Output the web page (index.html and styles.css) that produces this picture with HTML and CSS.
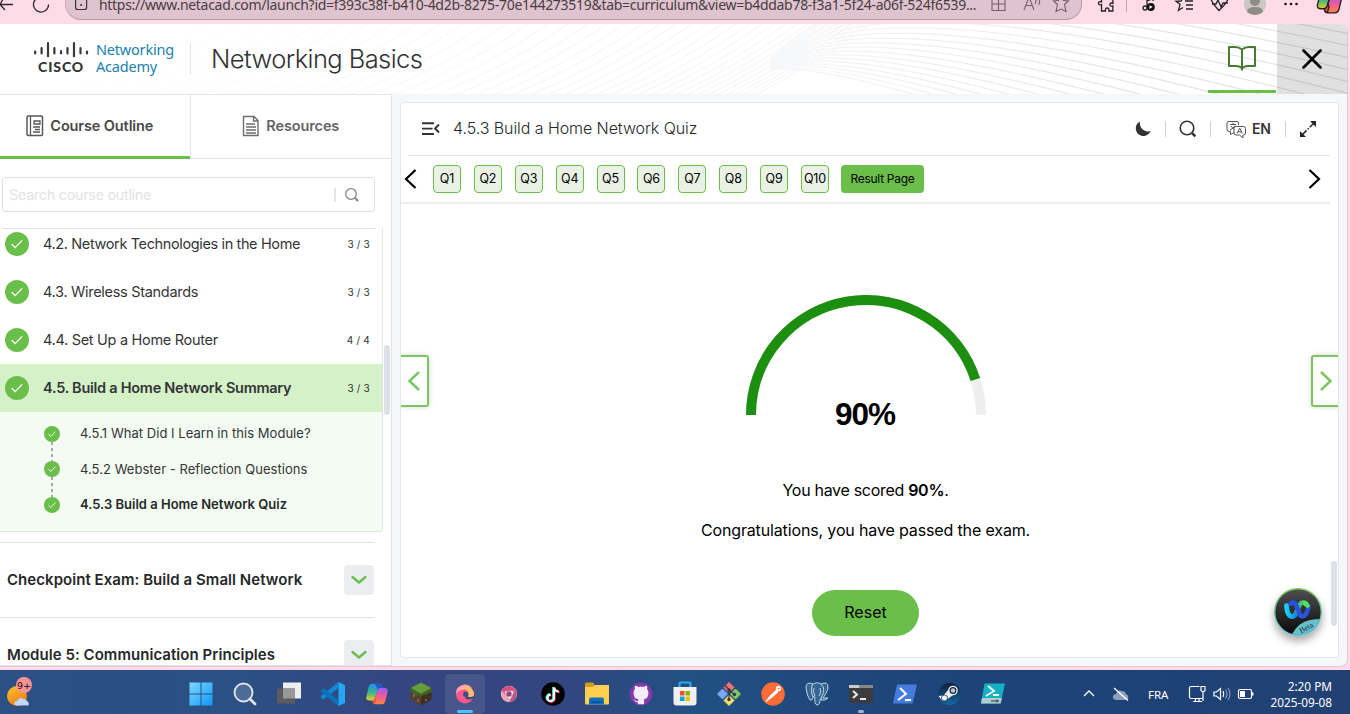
FILE: index.html
```html
<!DOCTYPE html>
<html lang="en">
<head>
<meta charset="utf-8">
<title>Networking Basics</title>
<link rel="stylesheet" href="styles.css">
</head>
<body>
<svg class="defs" width="0" height="0">
  <defs>
    <symbol id="check" viewBox="0 0 24 24"><circle cx="12" cy="12" r="12" fill="#6abf4b"/><path d="M6.700 12.200l3.500 3.400 7-7.200" fill="none" stroke="#fff" stroke-width="1.300"/></symbol>
    <symbol id="chev" viewBox="0 0 30 30"><path d="M8.500 12l6.500 5.500 6.500-5.500" fill="none" stroke="#6abf4b" stroke-width="2.400" stroke-linecap="round" stroke-linejoin="round"/></symbol>
    <linearGradient id="copA" x1="0" y1="0" x2="0" y2="1"><stop offset="0" stop-color="#1e90f0"/><stop offset=".55" stop-color="#3ab980"/><stop offset="1" stop-color="#f5c92b"/></linearGradient>
    <linearGradient id="copB" x1="0" y1="0" x2="0" y2="1"><stop offset="0" stop-color="#9b5cf5"/><stop offset=".5" stop-color="#ee5a9c"/><stop offset="1" stop-color="#fa8540"/></linearGradient>
    <symbol id="copilot" viewBox="0 0 26 26"><path d="M8 2h8q2 0 2.500 2l.7 2.500h-3q-2 0-2.700 2.500L11 17q-.7 3-3 3H5q-4.500 0-3.500-4L4 5q1-3 4-3z" fill="url(#copA)"/><path d="M18 24h-7q-2 0-2.600-2L8 20q2 0 3-3l2.500-8q.7-2.500 2.700-2.500H21q4.500 0 3.500 4L22 21q-1 3-4 3z" fill="url(#copB)"/><path d="M10 2h6q2 0 2.500 2l.7 2.500h-3q-2 0-2.700 2L12 4z" fill="#2355c9"/><path d="M8 20q2 0 3-3l.5-2 1 3-1.500 5.500q-2-.5-2.500-1.500z" fill="#f2593a"/></symbol>
  </defs>
</svg>

<div class="browser">
  <svg class="nav-icons" width="65" height="23" fill="none" stroke="#29272a" stroke-width="1.300"><path d="M0 4.500h13M0 4.500l5 5.500M0 4.500L3-1"/><path d="M48.500 4.500a7.500 7.500 0 1 1-12.800-5.300"/></svg>
  <div class="address">
    <svg width="30" height="20" fill="none" stroke="#3d3338" stroke-width="1.200"><rect x="9.600" y="-2" width="11" height="11.500" rx="2"/><circle cx="15.100" cy="5" r="1" fill="#3d3338" stroke="none"/></svg>
    <span class="url">https://www.netacad.com/launch?id=f393c38f-b410-4d2b-8275-70e144273519&amp;tab=curriculum&amp;view=b4ddab78-f3a1-5f24-a06f-524f6539...</span>
    <svg class="address-icons" width="100" height="20" fill="none" stroke="#75606a" stroke-width="1.100"><path d="M11-2v12.500h13V4H11M17.500-2v12.500M20-1h4v5"/><path d="M43 10l5-13 5 13M45 5.500h6.500M54-1q2 2 0 5M57-2q3 3 .5 7"/><path d="M76.500 4.500l-4-3.500 5-.5L80-4l2.500 4.500 5 .5-4 3.500 1.500 7-5-2.500-5 2.500z"/></svg>
  </div>
  <svg class="tool-icons" width="268" height="23" fill="none" stroke="#242225" stroke-width="1.300">
    <path d="M19.500-2v4q-3-1-3 1.300t3 1.200V11h4q-.5-3 1.700-3t1.700 3h4V6q-3 .7-3-1.500t3-1.200V-2"/><path d="M44.500 0v12" stroke="#c6a4b1" stroke-width="1"/>
    <path d="M65-3v10M71-3v4M65 1l5-2"/><circle cx="63" cy="8" r="2"/><circle cx="68.800" cy="7" r="4" fill="#111" stroke="none"/><path d="M67.500 5.200l3 1.800-3 1.900z" fill="#fff" stroke="none"/>
    <path d="M101-2l-2 3-5 .3 4 3-1.500 6L101 7.500M103 1h8M104 5h7M104 9h7"/>
    <path d="M129-1q1 4 8 11.500Q144 4 146-1M130 4h4l2-4 3 7 2-4h5"/>
    <circle cx="173" cy="4" r="11" fill="#cbc7c2" stroke="none"/><circle cx="173" cy="1" r="5" fill="#8f8a84" stroke="none"/><path d="M165 12q0-5 8-5t8 5q-8 6-16 0z" fill="#8f8a84" stroke="none"/>
    <g fill="#111" stroke="none"><circle cx="203.500" cy="4" r="1.300"/><circle cx="209" cy="4" r="1.300"/><circle cx="214.500" cy="4" r="1.300"/></g>
    <use href="#copilot" x="234" y="-12" width="27" height="27"/>
  </svg>
</div>

<div class="viewport">
  <header class="top">
    <svg class="waves" id="waves" width="1347" height="70"><defs><linearGradient id="wg" gradientUnits="userSpaceOnUse" x1="760" x2="1150" y1="0" y2="0"><stop offset="0" stop-color="#f7f8fa"/><stop offset="1" stop-color="#e0e5ea"/></linearGradient><linearGradient id="wl" gradientUnits="userSpaceOnUse" x1="100" x2="560" y1="0" y2="0"><stop offset="0" stop-color="#fdfdfe"/><stop offset="1" stop-color="#f2f4f6"/></linearGradient></defs></svg>
    <div class="brand">
      <div class="mark">
        <svg width="58" height="17" viewBox="0 0 58 17"><path d="M2.200 10.500v2M8.600 7v5.500M15 2.200v13M21.400 7v5.500M28 10v2.500M34.500 7v5.500M41 2.200v13M47.500 7v5.500M54 10.500v2" stroke="#3a3a3a" stroke-width="2.200" stroke-linecap="round"/></svg>
        <b class="cisco">CISCO</b>
      </div>
      <div class="academy"><span>Networking</span><span>Academy</span></div>
    </div>
    <h1>Networking Basics</h1>
    <div class="top-book"><svg width="30" height="28" fill="none" stroke="#457c31" stroke-width="2" stroke-linejoin="round"><path d="M15 5.500Q12 3 8 3H2v19h7q4 0 6 2.500 2-2.500 6-2.500h7V3h-6q-4 0-7 2.500zM15 5.500v21"/></svg></div>
    <div class="top-close"><svg width="20" height="20" stroke="#000" stroke-width="2.700" stroke-linecap="round"><path d="M1.500 1.500l17 17M18.500 1.500l-17 17"/></svg></div>
  </header>

  <div class="body">
    <aside class="side">
      <div class="tabs">
        <div class="tab on"><svg width="18" height="22" fill="none" stroke="#58585b" stroke-width="1.500"><rect x="1" y="1" width="15.500" height="19.500" rx="1"/><path d="M4.500 1v19.500M8 6h6v3H8zM7 12h7M9 14.500h5M7 17h7" stroke-width="1.300"/></svg>Course Outline</div>
        <div class="tab"><svg width="18" height="22" fill="none" stroke="#6e6e70" stroke-width="1.400"><path d="M1.500 1.500h10.500l4 4v15h-14.500zM11.500 1.500v4.500H16M4 9h9M4 12h10M4 15h10M4 18h10"/></svg>Resources</div>
      </div>
      <div class="search"><span>Search course outline</span><i></i><svg width="16" height="16" fill="none" stroke="#858588" stroke-width="1.300"><circle cx="7" cy="7" r="5.300"/><path d="M11 11l3 3" stroke-width="1.900"/></svg></div>
      <div class="outline">
        <div class="lessons">
          <div class="row"><svg class="ck"><use href="#check"/></svg><span class="t1">4.2. Network Technologies in the Home</span><em>3 / 3</em></div>
          <div class="row"><svg class="ck"><use href="#check"/></svg><span class="t2">4.3. Wireless Standards</span><em>3 / 3</em></div>
          <div class="row"><svg class="ck"><use href="#check"/></svg><span class="t3">4.4. Set Up a Home Router</span><em>4 / 4</em></div>
          <div class="row cur"><svg class="ck"><use href="#check"/></svg><span class="t4">4.5. Build a Home Network Summary</span><em>3 / 3</em></div>
          <div class="subs">
            <div class="sub"><svg class="ck"><use href="#check"/></svg><span>4.5.1 What Did I Learn in this Module?</span></div>
            <div class="sub"><svg class="ck"><use href="#check"/></svg><span>4.5.2 Webster - Reflection Questions</span></div>
            <div class="sub now"><svg class="ck"><use href="#check"/></svg><span>4.5.3 Build a Home Network Quiz</span></div>
          </div>
        </div>
        <div class="module"><span>Checkpoint Exam: Build a Small Network</span><svg class="drop"><use href="#chev"/></svg></div>
        <div class="module"><span>Module 5: Communication Principles</span><svg class="drop"><use href="#chev"/></svg></div>
        <div class="scroll side-scroll"></div>
      </div>
    </aside>

    <main class="panel">
      <div class="title-row">
        <svg width="20" height="16" stroke="#333" stroke-width="1.900" fill="none"><path d="M1 2.300h12M1 7.600h10.500M1 13h12M18 3.500l-4 4 4 4"/></svg>
        <h2>4.5.3 Build a Home Network Quiz</h2>
        <div class="tools">
          <svg class="moon" width="18" height="18"><path d="M6 1.500A7.600 7.600 0 1 0 16.500 11 8.200 8.200 0 0 1 6 1.500z" fill="#333"/></svg><i></i>
          <svg class="mag" width="20" height="20" fill="none" stroke="#333" stroke-width="1.600"><circle cx="9" cy="9" r="6.800"/><path d="M13.800 13.800l3.500 3.500" stroke-width="2.500"/></svg><i></i>
          <svg class="lang" width="20" height="19" fill="none" stroke="#555" stroke-width="1"><path d="M8 12.500l-3.500 2v-3H3q-2 0-2-2V3q0-1.500 2-1.500h8q1.500 0 1.500 1.500v2M4 4.500h6M7 3v1.500M9 5.500q-1.500 3-5 4.500M5 6l3 3.500M11 6.500h6.500q2 0 2 2V13q0 2-2 2H17v3l-3.500-3H10q-2 0-2-2V8.500q0-2 2-2zM11 13.500L13.700 8l2.600 5.500M12 11.800h3.500"/></svg>
          <b>EN</b><i></i>
          <svg class="expand" width="18" height="18"><path d="M3 15l12-12" stroke="#222" stroke-width="1.500" stroke-dasharray="6.500 1.500 1.500 1.500"/><path d="M11 1H17v6zM1 11V17h6z" fill="#1f2430"/></svg>
        </div>
      </div>
      <div class="quiz-nav">
        <svg class="prev" width="13" height="20" fill="none" stroke="#000" stroke-width="2.200"><path d="M11.500 1L2 10l9.500 9"/></svg>
        <div class="qs"><span>Q1</span><span>Q2</span><span>Q3</span><span>Q4</span><span>Q5</span><span>Q6</span><span>Q7</span><span>Q8</span><span>Q9</span><span>Q10</span></div>
        <div class="result">Result Page</div>
        <svg class="next" width="13" height="20" fill="none" stroke="#000" stroke-width="2.200"><path d="M1.500 1L11 10l-9.500 9"/></svg>
      </div>
      <div class="score">
        <div class="gauge">
          <svg width="240" height="120" fill="none" stroke-width="10"><path d="M5 120A115 115 0 0 1 235 120" stroke="#eee"/><path d="M5 120A115 115 0 0 1 229.370 84.460" stroke="#1c8f10"/></svg>
          <strong>90%</strong>
        </div>
        <p class="p1">You have scored <b>90%</b>.</p>
        <p class="p2">Congratulations, you have passed the exam.</p>
        <div class="reset">Reset</div>
      </div>
      <div class="side-btn left"><svg width="14" height="20"><path d="M12 1L2.500 10l9.500 9" fill="none" stroke="#7cc660" stroke-width="2.500"/></svg></div>
      <div class="side-btn right"><svg width="14" height="20"><path d="M2 1l9.500 9L2 19" fill="none" stroke="#7cc660" stroke-width="2.500"/></svg></div>
      <div class="scroll main-scroll"></div>
      <div class="webex">
        <svg width="48" height="48"><defs><linearGradient id="dark" x1="0" y1="0" x2="0" y2="1"><stop offset="0" stop-color="#505050"/><stop offset="1" stop-color="#080808"/></linearGradient><linearGradient id="ring" x1="0" y1="0" x2="0" y2="1"><stop offset="0" stop-color="#7cc65a"/><stop offset="1" stop-color="#5bbfdc"/></linearGradient><linearGradient id="w1" x1="0" y1="0" x2="1" y2="0"><stop offset="0" stop-color="#1ad0f5"/><stop offset="1" stop-color="#1685e0"/></linearGradient><linearGradient id="w2" x1="0" y1="0" x2="1" y2="0"><stop offset="0" stop-color="#1b78d8"/><stop offset="1" stop-color="#53e05a"/></linearGradient><clipPath id="round"><circle cx="24" cy="24" r="23"/></clipPath></defs>
        <circle cx="24" cy="24" r="23.300" fill="url(#dark)" stroke="url(#ring)" stroke-width="1.400"/><path d="M17 48q7-14 19-16 6-1 12-1v17z" fill="#66bfcb" clip-path="url(#round)"/>
        <g fill="none" stroke-width="4.600" stroke-linecap="round"><path d="M12.500 17.500C13 25 15.500 28.500 18.500 28.500 23.500 28.500 23.500 14.500 29 14.500q3 0 4 2.500" stroke="url(#w2)"/><path d="M12.500 17.500C13 25 15.500 28.500 18.500 28.500q2 0 3.300-3" stroke="url(#w1)"/><path d="M16.500 15.500Q20 12.500 22.500 18t3.500 9q3 3 6-1 2-3 2.500-8" stroke="#2853dc"/><path d="M31 15.500l2.500 2" stroke="#53e05a"/></g>
        <text x="27" y="45.500" transform="rotate(-28 27 45.500)" class="beta">Beta</text></svg>
      </div>
    </main>
  </div>
</div>

<footer class="taskbar">
  <div class="weather"><svg width="32" height="34"><defs><linearGradient id="sun" x1="0" y1="0" x2=".5" y2="1"><stop offset="0" stop-color="#f9c531"/><stop offset="1" stop-color="#ed7d15"/></linearGradient></defs><circle cx="11" cy="20" r="10" fill="url(#sun)"/><path d="M11 29.500q-3 0-2.500-3 .5-1.500 3-2 2-4 6-1.500 3 0 3.500 2 2.500 1 1.500 4.500z" fill="#c0d7f7"/><circle cx="18" cy="9" r="8" fill="#fb9294"/><text x="18" y="12.800" text-anchor="middle" class="badge">9+</text></svg></div>
  <div class="apps">
    <svg viewBox="0 0 26 26"><defs><linearGradient id="win" gradientUnits="userSpaceOnUse" x1="1" y1="1" x2="25" y2="25"><stop offset="0" stop-color="#80dcff"/><stop offset="1" stop-color="#0a94f7"/></linearGradient></defs><path d="M1.500 1.500h11v11h-11zM13.500 1.500h11v11h-11zM1.500 13.500h11v11h-11zM13.500 13.500h11v11h-11z" fill="url(#win)"/></svg>
    <svg viewBox="0 0 26 26" fill="none" stroke="#dfe2e7"><circle cx="11.500" cy="11.500" r="9" fill="#4c6b98" stroke-width="1.900"/><path d="M18 18l5 5" stroke-width="2.800" stroke-linecap="round"/></svg>
    <svg viewBox="0 0 26 26"><path d="M7 1.500h18v16H7z" fill="#eee"/><path d="M1 7.500h18v15H1z" fill="#5c5c5e"/><path d="M7 7.500h12v10H7z" fill="#999"/></svg>
    <svg viewBox="0 0 26 26"><path d="M18.500 1v6L3.500 18.500 1 17q-1-1 0-2z" fill="#1287d6"/><path d="M18.500 25v-6L3.500 7.500 1 9q-1 1 0 2z" fill="#0d70b8"/><path d="M18.500 1L25 4v18l-6.500 3z" fill="#27a6f3"/></svg>
    <svg viewBox="0 0 26 26"><use href="#copilot" x="1" y="1" width="24" height="24"/></svg>
    <svg viewBox="0 0 26 26"><path d="M13 1.500l10.500 5.500v11.500L13 24.500l-10.500-6V7z" fill="#5a3f2e"/><path d="M13 1.500l10.500 5.500-10.500 6L2.500 7z" fill="#659b3a"/><path d="M13 13l10.500-6v4l-2.500 1-2 3-2-1-4 3-3-3-3 1-2-3-2.500-1V7z" fill="#3c6424"/><path d="M13 15v9.500l10.500-6V11z" fill="#2b211c" opacity=".55"/><path d="M5 13h2v3H5zM9 18h2v3H9zM17 18h2v2h-2z" fill="#80604b"/></svg>
    <span class="active"><svg viewBox="0 0 26 26"><circle cx="13" cy="13.500" r="9" fill="#f9578d"/><path d="M4 13.500A9 9 0 0 1 20 7q-6-2-9 2-5 0-7 4.500z" fill="#ff9eb5"/><path d="M17 5.500q5 3 5 8-1 4.500-5.500 4-4.500 0-3.500-4 4-1 2-4-3-2-7-.5 4-5 9-3.500z" fill="#ffbc6c"/><circle cx="13.800" cy="13.200" r="2.700" fill="#414c87"/><path d="M15 15q3 2 7 0v2q-3 2-6 1.500-3-.5-3-3z" fill="#414c87"/></svg></span>
    <svg viewBox="0 0 26 26"><circle cx="13" cy="13" r="8.200" fill="#efa4bd"/><path d="M5.500 8.500Q9 5 13 5t7.500 4.500H13L8.500 13z" fill="#d74e86"/><path d="M13 21l3.500-6q1-3-1-5.500h5q2 11-7.500 11.500z" fill="#b65c8b"/><path d="M8.500 10.500h9.500L13.500 18z" fill="#fff"/><circle cx="13" cy="13" r="2.700" fill="#934975"/></svg>
    <svg viewBox="0 0 26 26"><circle cx="13" cy="13" r="11.800" fill="#000"/><g fill="none" stroke-width="2.200"><path d="M13.200 6v10.500a3.300 3.300 0 1 1-3.300-3.300M13.200 6q1 4 5 4" stroke="#25f4ee"/><path d="M14.600 7v10.500a3.300 3.300 0 1 1-3.300-3.300M14.600 7q1 4 5 4" stroke="#fe2c55"/><path d="M14 6.500v10.500a3.300 3.300 0 1 1-3.300-3.300M14 6.500q1 4 4.700 4" stroke="#fff" stroke-width="2"/></g></svg>
    <svg viewBox="0 0 26 26"><path d="M1 3q0-1.500 1.500-1.500H9l2 3h13q1 0 1 1.500v15H1z" fill="#d79a15"/><path d="M1 6h8l2-2h14v18.500q0 1-1 1H2q-1 0-1-1z" fill="#ffcf4d"/><path d="M5 23.500v-5q0-2 2-2h11q2 0 2 2v5z" fill="#126fbd"/><path d="M7 20h11v2H7z" fill="#0a569b"/></svg>
    <svg viewBox="0 0 26 26"><circle cx="13" cy="13" r="11.300" fill="#8638ad"/><path d="M13 5.500q-1.300 0-2.500.4Q8 4.500 7 4.800q-.5 1.700 0 3Q5.500 9.500 5.500 12q0 5.500 5 6.500-.5.700-.6 1.500-2 .5-3-1-.8-1.200-2-1 1.500.7 2 2 1 1.600 3 1.300v2h6.200v-3.500q0-.8-.6-1.300 5-1 5-6.500 0-2.500-1.500-4.200.5-1.300 0-3-1-.3-3.500 1.100Q14.300 5.500 13 5.500z" fill="#f4ecf7"/></svg>
    <svg viewBox="0 0 26 26"><path d="M7.500 7V2.500q0-1 1-1h9q1 0 1 1V7" fill="none" stroke="#29a9ef" stroke-width="2.200"/><path d="M1.500 6h23v15.500q0 3-3 3h-17q-3 0-3-3z" fill="#f0f0f0"/><path d="M8 10h4.500v4.500H8z" fill="#f25022"/><path d="M13.500 10H18v4.500h-4.500z" fill="#7fba00"/><path d="M8 15.500h4.500V20H8z" fill="#00a4ef"/><path d="M13.500 15.500H18V20h-4.500z" fill="#ffb900"/></svg>
    <svg viewBox="0 0 26 26"><g stroke-linejoin="round" stroke-width="1"><path d="M13 1.500l5 5-5 5-5-5z" fill="#f07373" stroke="#f07373"/><path d="M6.500 8l5 5-5 5-5-5z" fill="#7ba7f5" stroke="#7ba7f5"/><path d="M19.500 8l5 5-5 5-5-5z" fill="#80ce61" stroke="#80ce61"/><path d="M13 14.500l5 5-5 5-5-5z" fill="#f7dc65" stroke="#f7dc65"/></g><path d="M9 4.500l4 4v10M13 9l5.500 4.500" fill="none" stroke="#343846" stroke-width="1.200"/><g fill="#343846"><circle cx="13" cy="9" r="1.700"/><circle cx="13" cy="18.500" r="1.700"/><circle cx="18.500" cy="13.500" r="1.700"/></g></svg>
    <svg viewBox="0 0 26 26"><circle cx="13" cy="13" r="11.800" fill="#ff6c37"/><path d="M6 20.500l3.500-5 7-6.500 1.500 2-7 6z" fill="#fff" stroke="#fff"/><circle cx="18.500" cy="7.500" r="2.700" fill="#fff"/><path d="M17.500 8l3-1" stroke="#ff6c37"/></svg>
    <svg viewBox="0 0 26 26"><g fill="#336791" stroke="#c3d3e2" stroke-width="1"><path d="M9 3Q2 0 2 7q1 8 4 12 2 1 3-2z"/><path d="M17 3q7-3 7 3 0 4-5 11h5q-3 3-7 2z"/><path d="M8 4q4-4 9-1 5 5 1 12l-2 4q0 5-3 5-3-1-2-8-5 0-3-12z"/><path d="M10 7q-2 3 1 8M16 7q2 4-1 8" fill="none"/></g></svg>
    <span class="running"><svg viewBox="0 0 26 26"><path d="M1 4h24v18H1z" fill="#3c3c3c"/><path d="M1 4h24v3H1z" fill="#888"/><path d="M1 4h10v3H1z" fill="#ccc"/><path d="M5 10l4 3.500L5 17M12 18h6" fill="none" stroke="#eee" stroke-width="2"/></svg></span>
    <svg viewBox="0 0 26 26"><path d="M5 3.500h20L20.500 22.500H1z" fill="#467be0"/><path d="M8 7l6 6-8 6M13 19h6" fill="none" stroke="#fff" stroke-width="2"/></svg>
    <svg viewBox="0 0 26 26"><defs><linearGradient id="steam" x1="0" y1="0" x2="0" y2="1"><stop offset="0" stop-color="#101d3a"/><stop offset="1" stop-color="#126aa5"/></linearGradient></defs><circle cx="13.500" cy="13" r="11" fill="url(#steam)"/><path d="M2.500 15l5-.5 5-6 6 4.500-7 5-5 2z" fill="#eee"/><circle cx="17" cy="9.500" r="4.800" fill="#f4f4f4"/><circle cx="17" cy="9.500" r="2.900" fill="#bdc4cc" stroke="#13233f" stroke-width="1.200"/><circle cx="8.500" cy="17" r="3" fill="#f4f4f4" stroke="#13233f" stroke-width=".7"/></svg>
    <svg viewBox="0 0 26 26"><path d="M4.500 2.500h20.500L20.500 22.500H1z" fill="#16b0c4"/><path d="M2 17h20l-1.500 5.500H1z" fill="#b0cdd2"/><path d="M8 5l6 5-8 5M13 14h6" fill="none" stroke="#fff" stroke-width="1.800"/><path d="M11 20h8M17 18.500v3" stroke="#333"/></svg>
  </div>
  <svg class="tray" width="70" height="44" fill="none" stroke="#fff" stroke-width="1.300"><path d="M6 26l5-5 5 5"/><path d="M38 30q-4-1-3-4 1-2 3-2 2-5 6-3 3 0 4 3 4 2 1 6z" fill="#8da0be" stroke="none"/><path d="M36 18l14 12.500"/></svg>
  <span class="fra">FRA</span>
  <svg class="tray2" width="70" height="44" fill="none" stroke="#fff" stroke-width="1.200"><path d="M11.500 16.500H3q-1.500 0-1.500 1.500v9q0 1.500 1.500 1.500h11.500M5 31.500h9M7.500 29v2.500M11 29v2.500M13 16.500h4v4l-1 1h-2l-1-1zM15 22v9"/><path d="M26 22h2.500l4-3.500v11l-4-3.500H26zM35 21q1.500 3 0 6"/><path d="M37.500 19.500q3 4.500 0 9M40 18q4 6 0 12" stroke="#7e95b8"/><rect x="50.500" y="19.500" width="13" height="9" rx="1.500"/><path d="M64.500 22.500v3" stroke-width="2"/><path d="M52 21h5v6h-5z" fill="#fff" stroke="none"/></svg>
  <div class="clock">2:20 PM<br>2025-09-08</div>
</footer>
<script src="waves.js"></script>
</body>
</html>
```

FILE: styles.css
```css
* { box-sizing: border-box; }
body { margin: 0; width: 1350px; height: 714px; overflow: hidden; background: #ffdbe7; font-family: Inter, "Liberation Sans", sans-serif; color: #343537; }
svg { display: block; flex: none; }
.defs { position: absolute; }
.browser { height: 24px; display: flex; background: #ffdbe7; overflow: hidden; }
.address { width: 1017px; height: 20px; display: flex; background: #dfc3ce; border: 1px solid #b89aa6; border-top: 0; border-left-color: #c9abb7; border-radius: 0 0 16px 16px; }
.address-icons { margin-left: auto; }
.url { margin-left: 3px; font: 14px/20px "Noto Sans", sans-serif; letter-spacing: -.295px; color: #493d43; white-space: nowrap; margin-top: -5px; }
.viewport { width: 1348px; height: 643px; border: 1px solid #e8c6d2; border-width: 0 1px 1px 0; border-radius: 0 8px 8px 0; background: #f5f7f9; overflow: hidden; }
.top { position: relative; height: 70px; background: #fff; display: flex; align-items: stretch; }
.waves { position: absolute; inset: 0; }
.brand { position: relative; width: 191px; display: flex; padding: 17px 0 0 33px; }
.brand::after { content: ""; position: absolute; right: 0; top: 19px; height: 32px; border-right: 1px solid #e3e3e3; }
.mark { width: 58px; }
.cisco { display: block; padding-left: 5px; font: 900 14px/17px Lato, sans-serif; letter-spacing: .9px; color: #333; }
.academy { display: flex; flex-direction: column; margin-left: 5px; font: 14.500px/17px "Noto Sans", sans-serif; letter-spacing: -.2px; color: #2180ad; }
h1 { position: relative; margin: 0 0 0 20px; font-weight: 300; font-size: 25.500px; line-height: 70px; color: #333; letter-spacing: -.58px; }
.top-book { position: relative; margin-left: auto; width: 68px; margin-right: 1px; border-bottom: 3px solid #6abf4b; padding: 20px 0 0 19px; height: 69px; }
.top-close { position: relative; width: 70px; background: rgba(0,0,0,.12); display: grid; place-items: center; }
.body { display: flex; height: 572px; }
.side { width: 392px; height: 572px; background: #fff; border: 1px solid #e1e3e6; border-left: 0; display: flex; flex-direction: column; overflow: hidden; }
.tabs { display: flex; height: 64px; flex: none; border-bottom: 1px solid #dfe1e5; }
.tab { width: 201px; height: 63px; display: flex; align-items: center; justify-content: center; gap: 6px; padding-bottom: 2px; font-weight: 600; font-size: 14.500px; letter-spacing: -.12px; color: #646466; }
.tab.on { width: 191px; height: 64px; border-right: 1px solid #e1e3e6; color: #474749; box-shadow: inset 0 -3px #6abf4b; padding: 0 10px 3px 0; }
.search { margin: 18px 0 0 2px; width: 373px; height: 35px; flex: none; border: 1px solid #dcdfe4; border-radius: 3px; display: flex; align-items: center; font-size: 14.500px; letter-spacing: -.35px; color: #e3e3e5; padding-left: 6px; }
.search i { width: 2px; height: 14px; background: #e5e5e7; margin-left: auto; margin-right: 8px; }
.search svg { margin-right: 14px; }
.outline { position: relative; margin-top: 16px; flex: 1; min-height: 0; overflow: hidden; display: flex; flex-direction: column; }
.outline::before { content: ""; position: absolute; z-index: 1; left: 2px; top: 0; width: 373px; height: 1px; background: #e3e3e6; }
.lessons { margin-top: -8px; flex: none; width: 383px; height: 312px; border: 1px solid #e1e5e1; border-width: 0 1px 1px 0; border-radius: 0 0 4px 0; overflow: hidden; }
.row { height: 48px; display: flex; align-items: center; padding: 0 12px 0 5px; font-size: 14.500px; }
.row .ck { width: 24px; height: 24px; margin-right: 14px; }
.row em { margin-left: auto; font-style: normal; font-size: 10px; letter-spacing: .2px; font-weight: 400; }
.row.cur { background: #d5f1c8; }
.row span { white-space: nowrap; padding-bottom: 2px; letter-spacing: -.3px; }
.row .t1 { letter-spacing: -.37px; }
.row.cur span { font-weight: 600; letter-spacing: -.26px; }
.subs { background: #f3fbf2; height: 119px; padding-top: 4px; }
.sub { position: relative; height: 35.600px; display: flex; align-items: center; padding-left: 44px; font-size: 13px; letter-spacing: .04px; }
.sub span { padding-bottom: 1px; }
.sub .ck { width: 16px; height: 16px; margin-right: 20px; }
.sub + .sub::before { content: ""; position: absolute; left: 51px; top: -10px; height: 20px; width: 2px; background: repeating-linear-gradient(#a5a9a5 0 3px, transparent 3px 6px); }
.sub.now { font-weight: 600; color: #262829; letter-spacing: 0; }
.module { height: 75px; flex: none; width: 374px; display: flex; align-items: center; border-top: 1px solid #e2e2e4; padding-left: 7px; font-weight: 600; font-size: 15px; letter-spacing: .05px; color: #262829; }
.module span { padding-bottom: 2px; }
.lessons + .module { margin-top: 10px; }
.drop { width: 30px; height: 30px; margin-left: auto; background: #ecedf0; border-radius: 4px; }
.scroll { position: absolute; width: 6px; border-radius: 3px; background: #dde1e7; }
.side-scroll { left: 384px; top: 117px; height: 70px; }
.panel { position: relative; margin: 8px 0 0 8px; width: 939px; height: 556px; background: #fff; border: 1px solid #e4e6e9; border-radius: 4px; overflow: hidden; }
.title-row { margin: 0 8px 0 7px; height: 53px; border-bottom: 1px solid #e4e4e6; display: flex; align-items: center; padding-left: 13px; }
h2 { margin: 0 0 0 12px; padding-bottom: 2px; font-size: 16px; font-weight: 300; color: #26282a; letter-spacing: -.07px; }
.tools { margin-left: auto; display: flex; align-items: center; padding-right: 13px; }
.tools i { width: 1px; height: 16px; background: #cfd0d2; }
.moon { margin-right: 13px; }
.mag { margin: 0 12px 0 12px; }
.lang { margin: 0 6px 0 15px; }
.tools b { font-size: 14px; font-weight: 600; margin-right: 14px; padding-bottom: 1px; }
.expand { margin-left: 13px; }
.quiz-nav { height: 48px; border-bottom: 2px solid #ededef; display: flex; align-items: center; padding: 0 0 1px 3px; margin-right: 8px; color: #000; font-size: 12.500px; }
.qs { display: flex; gap: 12.900px; margin-left: 16px; }
.qs span { width: 28px; height: 28px; border: 1px solid #6abf4b; border-radius: 4px; background: #e9f2e5; display: grid; place-items: center; letter-spacing: -.1px; }
.result { margin-left: 12px; width: 83px; height: 28px; line-height: 27px; text-align: center; border-radius: 4px; background: #6abf4b; font-size: 12px; letter-spacing: -.3px; }
.next { margin-left: auto; margin-right: 9px; }
.score { width: 930px; padding-top: 91px; display: flex; flex-direction: column; align-items: center; color: #000; font-size: 16px; }
.gauge { position: relative; height: 120px; }
.gauge strong { position: absolute; left: 0; width: 238px; top: 101px; text-align: center; font: bold 31.500px/36px "Liberation Sans", sans-serif; letter-spacing: -1px; }
.score p { margin: 0 1px 0 0; line-height: 20px; letter-spacing: -.14px; }
.score b { font-weight: 600; }
.score .p1 { margin-top: 65px; letter-spacing: -.3px; }
.score .p2 { margin-top: 20px; }
.reset { margin-top: 50px; margin-right: 1px; width: 107px; height: 46px; line-height: 45px; border-radius: 23px; background: #6abf4b; text-align: center; }
.side-btn { position: absolute; top: 252px; height: 52px; width: 28px; background: #fff; border: 2px solid #7cc660; box-shadow: 0 0 5px rgba(0,0,0,.18); display: grid; place-items: center; }
.side-btn.left { left: 0; border-left: 0; border-radius: 0 3px 3px 0; }
.side-btn.right { right: -1px; border-right: 0; border-radius: 3px 0 0 3px; }
.main-scroll { left: 930px; top: 458px; height: 65px; }
.webex { position: absolute; left: 873px; top: 485px; width: 48px; height: 48px; border-radius: 50%; box-shadow: 0 5px 9px rgba(0,0,0,.35); }
.beta { font: 8px "Liberation Serif", serif; fill: #19343b; }
.taskbar { margin-top: 3px; height: 44px; display: flex; color: #fff; background: linear-gradient(90deg, #2c4f84, #2b5083 18%, #35457f 30%, #33467f 41%, #225082 51%, #1f477a 62%, #1d4379 75%, #214173 100%); font-family: "Noto Sans", sans-serif; }
.weather { width: 179px; padding: 6px 0 0 6px; }
.badge { font: 9.500px "DejaVu Sans", sans-serif; fill: #111; }
.apps { display: flex; width: 836px; }
.apps > svg { width: 26px; height: 26px; margin: 11px 9px 0; }
.apps span { width: 40px; margin: 4px 2px 0; padding: 7px 7px 0; position: relative; height: 40px; }
.apps span svg { width: 26px; height: 26px; }
.active { background: rgba(255,255,255,.09); border-radius: 4px; }
.active::after, .running::after { content: ""; position: absolute; bottom: 1px; left: 12px; width: 16px; height: 3px; border-radius: 2px; background: #4cc2ff; }
.running::after { left: 17px; width: 6px; background: #aab3c3; }
.tray { margin-left: 63px; }
.fra { font-size: 11.500px; line-height: 49px; width: 40px; white-space: nowrap; }
.clock { margin-left: auto; margin-right: 18px; padding-top: 8px; text-align: right; font-size: 11.800px; line-height: 16px; }
```

FILE: waves.js
```javascript
// Faint contour lines behind the page header.
const svg = document.getElementById('waves');
function line(d, stroke, width) {
  const p = document.createElementNS('http://www.w3.org/2000/svg', 'path');
  p.setAttribute('d', d);
  p.setAttribute('fill', 'none');
  p.setAttribute('stroke', stroke);
  p.setAttribute('stroke-width', width);
  svg.appendChild(p);
}
let x = 60;
for (let i = 0; i < 40; i++) {
  const t = i / 39;
  const reach = 150 - 30 * t;
  line(`M${x} 72Q${x + reach * 0.55} ${45 - 8 * t} ${x + reach} -2`, 'url(#wl)', 1);
  x += 29 - 23 * t;
}
for (let i = 0; i < 19; i++) {
  const a = -70 + i * 8;
  line(`M770 ${36 + i * 0.5}C830 ${a * 0.5 + 4} 960 ${a} 1350 ${a + 80 + 4 * i}`, 'url(#wg)', 1.2);
}
```
